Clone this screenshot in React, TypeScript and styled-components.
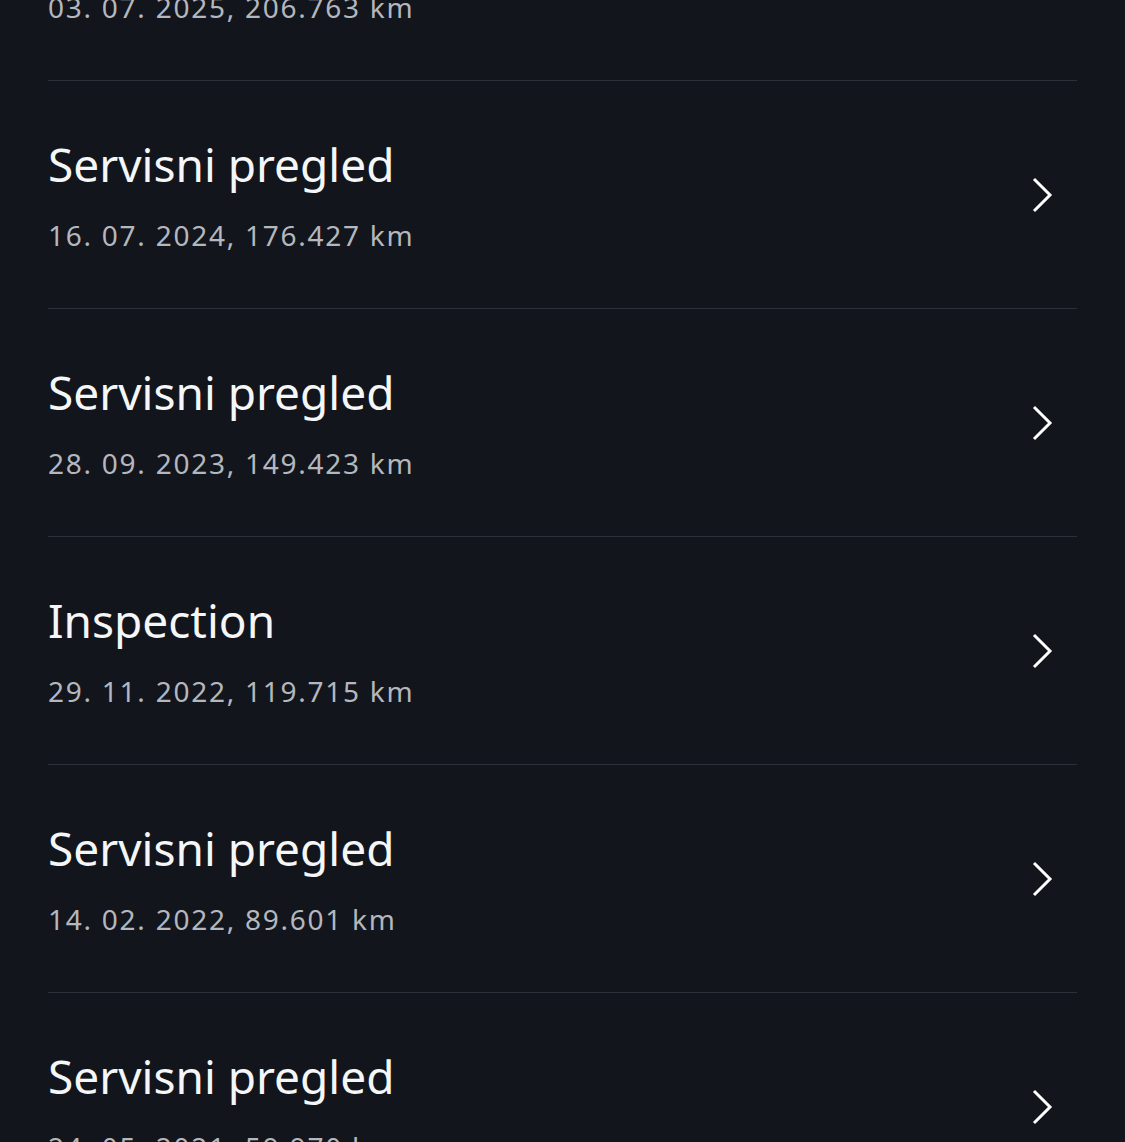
import React from 'react';
import styled, { createGlobalStyle } from 'styled-components';

const GlobalStyle = createGlobalStyle`
	html, body {
		margin: 0;
		padding: 0;
		background: #12151c;
	}
	body {
		font-family: 'Noto Sans', 'Open Sans', sans-serif;
		-webkit-font-smoothing: antialiased;
	}
`;

const Screen = styled.div`
	width: 1125px;
	height: 1142px;
	overflow: hidden;
	background: #12151c;
`;

// list is scrolled: first row is partly above the top edge
const List = styled.div`
	display: flex;
	flex-direction: column;
	margin-top: -147px;
	padding: 0 48px;
`;

const Item = styled.div`
	display: flex;
	align-items: center;
	justify-content: space-between;
	height: 227px;
	border-bottom: 1px solid #2c3038;
	cursor: pointer;
`;

const Texts = styled.div`
	display: flex;
	flex-direction: column;
	gap: 25px;
`;

const Title = styled.div`
	font-size: 46px;
	line-height: 56px;
	color: #f5f6f7;
	letter-spacing: 0;
`;

const Meta = styled.div`
	font-size: 28px;
	line-height: 36px;
	color: #b4b7bd;
	letter-spacing: 1.75px;
`;

const Chevron = styled.svg`
	width: 24px;
	height: 40px;
	margin-right: 24px;
	flex-shrink: 0;
`;

const entries = [
	{ title: 'Servisni pregled', meta: '03. 07. 2025, 206.763 km' },
	{ title: 'Servisni pregled', meta: '16. 07. 2024, 176.427 km' },
	{ title: 'Servisni pregled', meta: '28. 09. 2023, 149.423 km' },
	{ title: 'Inspection', meta: '29. 11. 2022, 119.715 km' },
	{ title: 'Servisni pregled', meta: '14. 02. 2022, 89.601 km' },
	{ title: 'Servisni pregled', meta: '24. 05. 2021, 59.970 km' },
];

export default function App() {
	return (
		<Screen>
			<GlobalStyle />
			<List>
				{entries.map((e, i) => (
					<Item key={i}>
						<Texts>
							<Title>{e.title}</Title>
							<Meta>{e.meta}</Meta>
						</Texts>
						<Chevron viewBox="0 0 24 40">
							<polyline points="5,4 21,20 5,36" fill="none" stroke="#fff" strokeWidth="3" />
						</Chevron>
					</Item>
				))}
			</List>
		</Screen>
	);
}
